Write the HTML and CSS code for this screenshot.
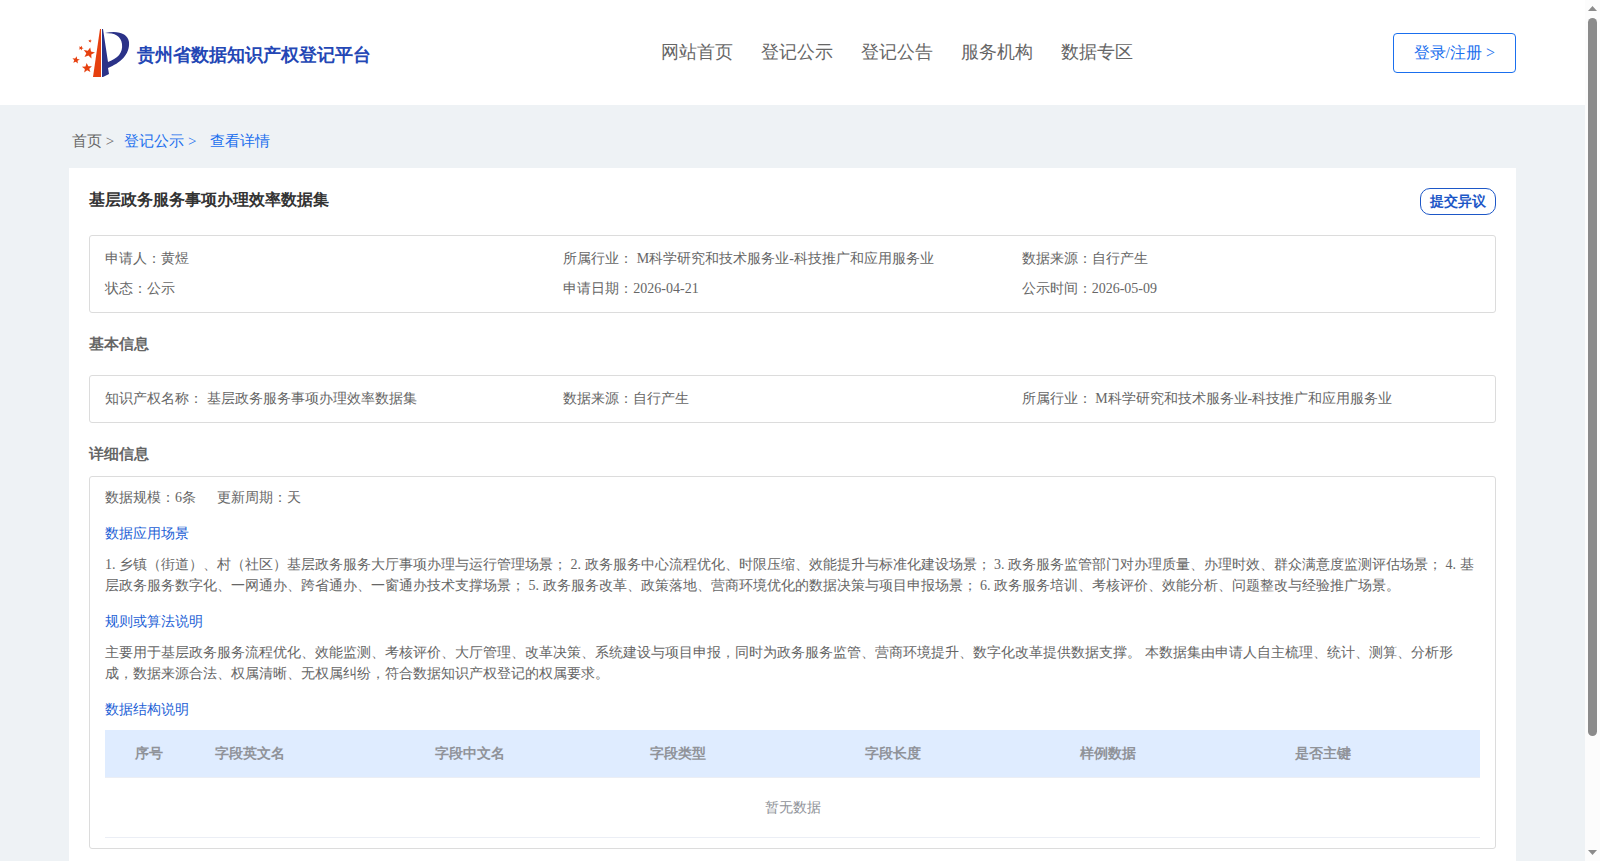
FILE: index.html
```html
<!DOCTYPE html>
<html>
<head>
<meta charset="utf-8">
<title>贵州省数据知识产权登记平台</title>
<link rel="stylesheet" href="styles.css">
</head>
<body>
<div class="viewport">
<div class="page">
  <header class="header">
    <a class="brand" href="#">
      <svg class="brand-logo" viewBox="0 0 58 50" aria-hidden="true">
        <defs>
          <path id="star" d="M0-5 1.400-1.700 5-1.500 2.200.8 3.100 4.200 0 2.300-3.100 4.200-2.200.8-5-1.500-1.400-1.700z"/>
        </defs>
        <g fill="#e6400f">
          <path d="M28 1h1v48h-8z"/>
          <use href="#star" transform="translate(17 25) rotate(12) scale(1.15)"/>
          <use href="#star" transform="translate(4 32) rotate(8) scale(.75)"/>
          <use href="#star" transform="translate(15 40) rotate(-4) scale(1)"/>
          <use href="#star" transform="translate(9 20) rotate(20) scale(.5)"/>
          <use href="#star" transform="translate(18 13) rotate(10) scale(.35)"/>
        </g>
        <path fill="#2b3288" d="M30 1h1l5 33C46 30 51 25 50 16 49 8 43 5 33 5 45 2 56 5 57 14c1 13-9 21-21 26l1 6-6 3h-1z"/>
      </svg>
      <span class="brand-name">贵州省数据知识产权登记平台</span>
    </a>
    <nav class="nav">
      <a href="#">网站首页</a>
      <a href="#">登记公示</a>
      <a href="#">登记公告</a>
      <a href="#">服务机构</a>
      <a href="#">数据专区</a>
    </nav>
    <button class="login" type="button">登录/注册 &gt;</button>
  </header>

  <main class="main">
    <nav class="crumbs">
      <a class="crumb-home" href="#">首页 &gt;</a>
      <a class="crumb-list" href="#">登记公示 &gt;</a>
      <a href="#">查看详情</a>
    </nav>

    <article class="card">
      <div class="card-head">
        <h1 class="title">基层政务服务事项办理效率数据集</h1>
        <button class="objection" type="button">提交异议</button>
      </div>

      <div class="box grid">
        <div>申请人：黄煜</div>
        <div>所属行业： M科学研究和技术服务业-科技推广和应用服务业</div>
        <div>数据来源：自行产生</div>
        <div>状态：公示</div>
        <div>申请日期：2026-04-21</div>
        <div>公示时间：2026-05-09</div>
      </div>

      <h2 class="section section-basic">基本信息</h2>
      <div class="box grid">
        <div>知识产权名称： 基层政务服务事项办理效率数据集</div>
        <div>数据来源：自行产生</div>
        <div>所属行业： M科学研究和技术服务业-科技推广和应用服务业</div>
      </div>

      <h2 class="section section-detail">详细信息</h2>
      <div class="box detail">
        <div class="summary"><span>数据规模：6条</span><span>更新周期：天</span></div>
        <h3 class="sub">数据应用场景</h3>
        <p class="text">1. 乡镇（街道）、村（社区）基层政务服务大厅事项办理与运行管理场景； 2. 政务服务中心流程优化、时限压缩、效能提升与标准化建设场景； 3. 政务服务监管部门对办理质量、办理时效、群众满意度监测评估场景； 4. 基层政务服务数字化、一网通办、跨省通办、一窗通办技术支撑场景； 5. 政务服务改革、政策落地、营商环境优化的数据决策与项目申报场景； 6. 政务服务培训、考核评价、效能分析、问题整改与经验推广场景。</p>
        <h3 class="sub">规则或算法说明</h3>
        <p class="text">主要用于基层政务服务流程优化、效能监测、考核评价、大厅管理、改革决策、系统建设与项目申报，同时为政务服务监管、营商环境提升、数字化改革提供数据支撑。 本数据集由申请人自主梳理、统计、测算、分析形成，数据来源合法、权属清晰、无权属纠纷，符合数据知识产权登记的权属要求。</p>
        <h3 class="sub">数据结构说明</h3>
        <table class="table">
          <colgroup>
            <col class="col-index"><col class="col-name"><col class="col"><col class="col"><col class="col"><col class="col"><col>
          </colgroup>
          <thead>
            <tr><th class="index">序号</th><th>字段英文名</th><th>字段中文名</th><th>字段类型</th><th>字段长度</th><th>样例数据</th><th>是否主键</th></tr>
          </thead>
          <tbody>
            <tr><td class="empty" colspan="7">暂无数据</td></tr>
          </tbody>
        </table>
      </div>
    </article>
  </main>
</div>
<div class="scrollbar" aria-hidden="true">
  <svg class="arrow" viewBox="0 0 9 5"><path d="M0 5 4.500 0 9 5z"/></svg>
  <div class="track"><div class="thumb"></div></div>
  <svg class="arrow" viewBox="0 0 9 5"><path d="M0 0h9L4.500 5z"/></svg>
</div>
</div>
</body>
</html>
```
FILE: styles.css
```css
* {
  box-sizing: border-box;
}

body {
  margin: 0;
  color: #666;
  font-family: "Liberation Serif", serif;
  font-size: 14px;
}

a {
  color: inherit;
  text-decoration: none;
}

button {
  font-family: inherit;
  background: #fff;
  cursor: pointer;
}

h1, h2, h3, p {
  margin: 0;
}

.viewport {
  display: flex;
  height: 100vh;
}

.page {
  flex: 1;
  min-width: 0;
  overflow-y: auto;
  scrollbar-width: none;
  background: #eef2f5;
}

.scrollbar {
  display: flex;
  flex-direction: column;
  align-items: center;
  width: 15px;
  padding: 6px 0;
  background: #fcfcfc;
}

.arrow {
  width: 9px;
  height: 5px;
  fill: #8b8b8b;
}

.track {
  flex: 1;
  width: 9px;
  padding: 7px 0;
}

.thumb {
  height: 87%;
  border-radius: 5px;
  background: #8b8b8b;
}

.header {
  display: flex;
  align-items: center;
  justify-content: space-between;
  height: 105px;
  padding: 0 69px 0 72px;
  background: #fff;
}

.brand {
  display: flex;
  align-items: center;
  gap: 7px;
  color: #2447b5;
  font-size: 18px;
  font-weight: bold;
}

.brand-logo {
  width: 58px;
  height: 50px;
}

.brand-name {
  padding-top: 4px;
}

.nav {
  display: flex;
  gap: 28px;
  margin-left: 30px;
  padding-bottom: 2px;
  color: #666;
  font-size: 18px;
}

.login {
  height: 40px;
  padding: 2px 20px 0;
  border: 1px solid #1a6fee;
  border-radius: 4px;
  color: #1a6fee;
  font-size: 16px;
}

.main {
  padding: 0 69px 120px;
}

.crumbs {
  display: flex;
  align-items: center;
  height: 63px;
  padding: 10px 3px 0;
  color: #1a6fee;
  font-size: 15px;
}

.crumb-home {
  margin-right: 10px;
  color: #666;
}

.crumb-list {
  margin-right: 14px;
}

.card {
  padding: 20px 20px 40px;
  background: #fff;
}

.card-head {
  display: flex;
  justify-content: space-between;
  height: 47px;
}

.title {
  color: #333;
  font-size: 16px;
  line-height: 24px;
}

.objection {
  height: 27px;
  padding: 0 9px;
  border: 1px solid #1d57c7;
  border-radius: 10px;
  color: #1d57c7;
  font-size: 14px;
  font-weight: bold;
}

.box {
  border: 1px solid #dcdcdc;
  border-radius: 3px;
}

.grid {
  display: grid;
  grid-template-columns: repeat(3, 1fr);
  padding: 8px 15px;
  line-height: 30px;
}

.section {
  font-size: 15px;
  line-height: 20px;
}

.section-basic {
  padding: 21px 0;
}

.section-detail {
  padding: 21px 0 12px;
}

.detail {
  padding: 10px 15px;
}

.summary {
  display: flex;
  gap: 21px;
  line-height: 21px;
}

.sub {
  padding: 15px 0 10px;
  color: #1d5fd6;
  font-size: 14px;
  font-weight: normal;
  line-height: 21px;
}

.text {
  line-height: 21px;
}

.table {
  width: 100%;
  border-collapse: separate;
  border-spacing: 0;
  table-layout: fixed;
  color: #909399;
}

.col-index {
  width: 100px;
}

.col-name {
  width: 220px;
}

.col {
  width: 215px;
}

.table th {
  height: 48px;
  padding: 0 10px;
  border-bottom: 1px solid #ebeef5;
  background: #dfecff;
  text-align: left;
}

.table .index {
  padding-left: 30px;
}

.table .empty {
  height: 60px;
  padding: 0;
  border-bottom: 1px solid #ebeef5;
  text-align: center;
}
```
